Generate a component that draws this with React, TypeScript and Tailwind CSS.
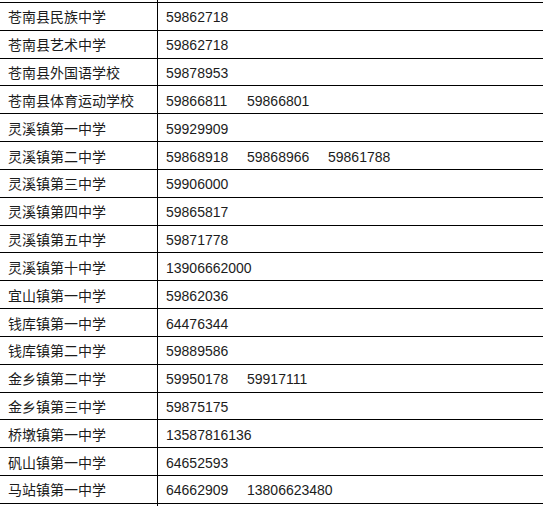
const rows: [string, string[]][] = [
  ['苍南县民族中学', ['59862718']],
  ['苍南县艺术中学', ['59862718']],
  ['苍南县外国语学校', ['59878953']],
  ['苍南县体育运动学校', ['59866811', '59866801']],
  ['灵溪镇第一中学', ['59929909']],
  ['灵溪镇第二中学', ['59868918', '59868966', '59861788']],
  ['灵溪镇第三中学', ['59906000']],
  ['灵溪镇第四中学', ['59865817']],
  ['灵溪镇第五中学', ['59871778']],
  ['灵溪镇第十中学', ['13906662000']],
  ['宜山镇第一中学', ['59862036']],
  ['钱库镇第一中学', ['64476344']],
  ['钱库镇第二中学', ['59889586']],
  ['金乡镇第二中学', ['59950178', '59917111']],
  ['金乡镇第三中学', ['59875175']],
  ['桥墩镇第一中学', ['13587816136']],
  ['矾山镇第一中学', ['64652593']],
  ['马站镇第一中学', ['64662909', '13806623480']],
]

export default function App() {
  return (
    <div className="w-[545px] h-[506px] bg-white text-[14px] text-[#1c1c1c] font-['Liberation_Sans','Noto_Sans_CJK_SC',sans-serif] overflow-hidden">
      <div className="flex h-[2px]">
        <div className="w-[158px] border-r border-black" />
      </div>
      <div className="w-[543px] border-t border-black">
        {rows.map(([name, phones]) => (
          <div key={name} className="flex h-[27.83px] border-b border-black">
            <div className="w-[158px] shrink-0 border-r border-black pl-[8px] pt-[3px] flex items-center whitespace-nowrap">
              {name}
            </div>
            <div className="flex-1 pl-[8px] pt-[3px] flex items-center whitespace-nowrap">
              {phones.map((p, i) => (
                <span key={p + i} className={i < phones.length - 1 ? 'inline-block w-[81px]' : ''}>
                  {p}
                </span>
              ))}
            </div>
          </div>
        ))}
      </div>
      <div className="flex h-[4px]">
        <div className="w-[158px] border-r border-black" />
      </div>
    </div>
  )
}
